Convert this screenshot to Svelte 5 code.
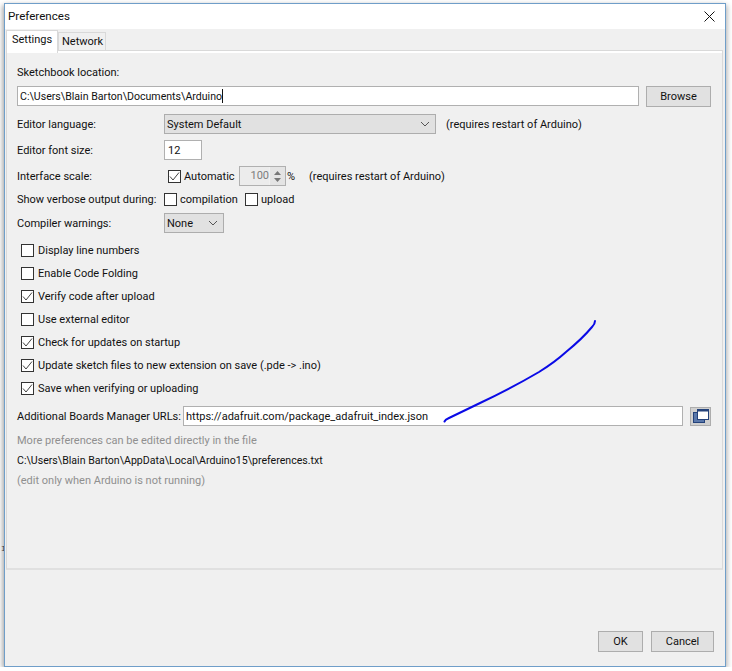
<script>
	const options = [
		{ label: 'Display line numbers', checked: false },
		{ label: 'Enable Code Folding', checked: false },
		{ label: 'Verify code after upload', checked: true },
		{ label: 'Use external editor', checked: false },
		{ label: 'Check for updates on startup', checked: true },
		{ label: 'Update sketch files to new extension on save (.pde -> .ino)', checked: true },
		{ label: 'Save when verifying or uploading', checked: true }
	];
</script>

{#snippet box(checked)}
	<span class="box">
		{#if checked}
			<svg width="11" height="11" viewBox="0 0 11 11"><path d="M1 5.5 L4 9 L10 1.5" fill="none" stroke="#444" stroke-width="1" /></svg>
		{/if}
	</span>
{/snippet}

{#snippet chevron()}
	<svg class="chevron" width="10" height="6" viewBox="0 0 10 6"><path d="M1 1 L5 5 L9 1" fill="none" stroke="#555" stroke-width="1" /></svg>
{/snippet}

<span class="stray">I</span>

<div class="window">
	<header class="titlebar">
		<span>Preferences</span>
		<svg width="11" height="11" viewBox="0 0 11 11"><path d="M0.5 0.5 L10.5 10.5 M10.5 0.5 L0.5 10.5" stroke="#111" stroke-width="1" /></svg>
	</header>

	<nav class="tabs">
		<div class="tab active">Settings</div>
		<div class="tab">Network</div>
	</nav>

	<main class="panel">
		<div class="row sketch-label">Sketchbook location:</div>
		<div class="row sketch">
			<div class="input sketch-input"><span class="tight">C:\Users\Blain Barton\Documents\Arduino</span><i class="caret"></i></div>
			<div class="btn browse">Browse</div>
		</div>

		<div class="row language">
			<label for="lang">Editor language:</label>
			<div class="select lang" id="lang">System Default {@render chevron()}</div>
			<span class="note">(requires restart of Arduino)</span>
		</div>

		<div class="row fontsize">
			<label for="size">Editor font size:</label>
			<div class="input size" id="size">12</div>
		</div>

		<div class="row scale">
			<label for="auto">Interface scale:</label>
			<div class="auto" id="auto">{@render box(true)} Automatic</div>
			<div class="spinner">
				<span class="value">100</span>
				<span class="arrows">
					<svg width="15" height="18" viewBox="0 0 15 18"><path d="M7.5 4 L11 8 H4 Z M4 11 H11 L7.5 15 Z" fill="#777" /></svg>
				</span>
			</div>
			<span class="percent">%</span>
			<span class="note scale-note">(requires restart of Arduino)</span>
		</div>

		<div class="row verbose">
			<label for="verb">Show verbose output during:</label>
			<div class="verb" id="verb">
				<span class="check compile">{@render box(false)} compilation</span>
				<span class="check">{@render box(false)} upload</span>
			</div>
		</div>

		<div class="row warnings">
			<label for="warn">Compiler warnings:</label>
			<div class="select warn" id="warn">None {@render chevron()}</div>
		</div>

		<ul class="options">
			{#each options as opt}
				<li>{@render box(opt.checked)} {opt.label}</li>
			{/each}
		</ul>

		<div class="row boards">
			<label for="urls">Additional Boards Manager URLs:</label>
			<div class="input urls" id="urls">https://adafruit.com/package_adafruit_index.json</div>
			<div class="btn windows">
				<svg width="16" height="15" viewBox="0 0 16 15">
					<rect x="0.5" y="3.5" width="11" height="10" fill="#5a78ab" stroke="#24427a" />
					<rect x="4.5" y="0.5" width="11" height="10" fill="#fff" stroke="#24427a" />
					<rect x="5" y="1" width="10" height="1.5" fill="#24427a" />
				</svg>
			</div>
		</div>

		<p class="hint first">More preferences can be edited directly in the file</p>
		<p class="path tight">C:\Users\Blain Barton\AppData\Local\Arduino15\preferences.txt</p>
		<p class="hint">(edit only when Arduino is not running)</p>
	</main>

	<footer class="footer">
		<div class="btn ok">OK</div>
		<div class="btn cancel">Cancel</div>
	</footer>

	<!-- hand-drawn annotation on top of the dialog -->
	<svg class="scribble" width="722" height="664" viewBox="4 3 722 664">
		<path d="M444.5 421.5 Q445.5 419.5 448 418.5 L478 404 Q510 389 539 372 Q555 362 566 352 Q582 339 592 327 Q595 324 595 321" fill="none" stroke="#0a0ae6" stroke-width="2" stroke-linecap="round" />
	</svg>
</div>

<style>
	:global(body) {
		background: #fff;
	}

	.stray {
		position: absolute;
		left: 1px;
		top: 544px;
		font: 8px 'Liberation Mono', monospace;
		color: #555;
	}

	.window {
		position: relative;
		box-sizing: border-box;
		display: flex;
		flex-direction: column;
		width: 722px;
		height: 664px;
		margin: 3px 0 0 4px;
		border: 1px solid #6f9ec9;
		background: #f0f0f0;
		box-shadow: -2px 2px 5px rgba(0, 0, 0, 0.28), 2px 2px 5px rgba(0, 0, 0, 0.2);
		font-family: 'Roboto', 'Liberation Sans', sans-serif;
		font-size: 11px;
		color: #111;
		white-space: nowrap;
	}

	.tight {
		font-size: 10.6px;
	}

	.titlebar {
		display: flex;
		justify-content: space-between;
		align-items: center;
		box-sizing: border-box;
		height: 25px;
		padding: 0 10px 1px 3px;
		background: #fff;
		font-size: 11.6px;
		flex: none;
	}

	.tabs {
		display: flex;
		align-items: flex-end;
		height: 21px;
		padding-left: 1px;
		flex: none;
	}

	.tab {
		box-sizing: border-box;
		width: 48px;
		height: 18px;
		padding: 2px 0 0 3px;
		border: 1px solid #d9d9d9;
		border-bottom: 0;
		background: #f0f0f0;
	}

	.tab.active {
		position: relative;
		z-index: 1;
		width: 52px;
		height: 23px;
		padding: 2px 0 0 5px;
		margin-bottom: -3px;
		background: #fff;
	}

	.panel {
		box-sizing: border-box;
		height: 520px;
		margin: 0 2px 0 1px;
		padding: 0 11px 0 10px;
		border: 1px solid #d9d9d9;
		border-bottom: 2px solid #e0e0e0;
		background: #f0f0f0;
		box-shadow: inset 0 2px 0 #fff;
		flex: none;
	}

	.row {
		display: flex;
		align-items: center;
	}

	.row label {
		flex: none;
		width: 147px;
	}

	.sketch-label {
		height: 20px;
		margin-top: 11px;
	}

	.sketch {
		margin-top: 4px;
		justify-content: space-between;
		align-items: flex-start;
	}

	.input {
		box-sizing: border-box;
		display: flex;
		align-items: center;
		height: 20px;
		padding-left: 2px;
		border: 1px solid #b0b0b0;
		background: #fff;
	}

	.sketch-input {
		width: 622px;
	}

	.caret {
		width: 1px;
		height: 14px;
		background: #111;
	}

	.btn {
		box-sizing: border-box;
		display: flex;
		align-items: center;
		justify-content: center;
		border: 1px solid #adadad;
		background: #e1e1e1;
	}

	.browse {
		width: 65px;
		height: 21px;
	}

	.select {
		box-sizing: border-box;
		display: flex;
		align-items: center;
		justify-content: space-between;
		height: 20px;
		padding: 0 5px 0 2px;
		border: 1px solid #adadad;
		background: #e1e1e1;
	}

	.language {
		height: 20px;
		margin-top: 7px;
	}

	.lang {
		width: 272px;
	}

	.note {
		margin-left: 10px;
	}

	.fontsize {
		height: 20px;
		margin-top: 6px;
	}

	.size {
		width: 38px;
		padding-left: 3px;
	}

	.scale {
		height: 20px;
		margin-top: 6px;
	}

	.auto {
		display: flex;
		align-items: center;
		gap: 3px;
		width: 71px;
		margin-left: 4px;
	}

	.spinner {
		box-sizing: border-box;
		display: flex;
		justify-content: space-between;
		width: 47px;
		height: 20px;
		border: 1px solid #b0b0b0;
		background: #f0f0f0;
	}

	.value {
		width: 29px;
		text-align: right;
		line-height: 18px;
		color: #7d7d7d;
		background: #ececec;
	}

	.arrows {
		display: block;
		width: 15px;
		background: #e4e4e4;
	}

	.arrows svg {
		display: block;
	}

	.percent {
		width: 10px;
		margin-left: 1px;
	}

	.scale-note {
		margin-left: 12px;
	}

	.verbose {
		height: 20px;
		margin-top: 3px;
	}

	.verb {
		display: flex;
	}

	.check {
		display: flex;
		align-items: center;
		gap: 3px;
	}

	.compile {
		width: 81px;
	}

	.warnings {
		height: 20px;
		margin-top: 4px;
	}

	.warn {
		width: 60px;
	}

	.box {
		box-sizing: border-box;
		display: inline-flex;
		align-items: center;
		justify-content: center;
		flex: none;
		width: 13px;
		height: 13px;
		border: 1px solid #333;
		background: #fff;
	}

	.options {
		list-style: none;
		margin: 6px 0 0;
		padding: 0 0 0 4px;
	}

	.options li {
		display: flex;
		align-items: center;
		gap: 4px;
		height: 23px;
	}

	.boards {
		height: 20px;
		margin-top: 6px;
	}

	.boards label {
		width: 166px;
	}

	.urls {
		width: 500px;
	}

	.windows {
		width: 21px;
		height: 19px;
		margin: 1px 0 0 7px;
		background: #d0d0d0;
	}

	p {
		margin: 0;
		height: 20px;
		line-height: 20px;
	}

	.first {
		margin-top: 5px;
	}

	.hint {
		color: #8f8f8f;
	}

	.footer {
		display: flex;
		justify-content: flex-end;
		gap: 8px;
		padding: 61px 11px 0 0;
		flex: none;
	}

	.ok {
		width: 45px;
		height: 21px;
	}

	.cancel {
		width: 63px;
		height: 21px;
	}

	.scribble {
		position: absolute;
		left: -1px;
		top: -1px;
		pointer-events: none;
	}
</style>
